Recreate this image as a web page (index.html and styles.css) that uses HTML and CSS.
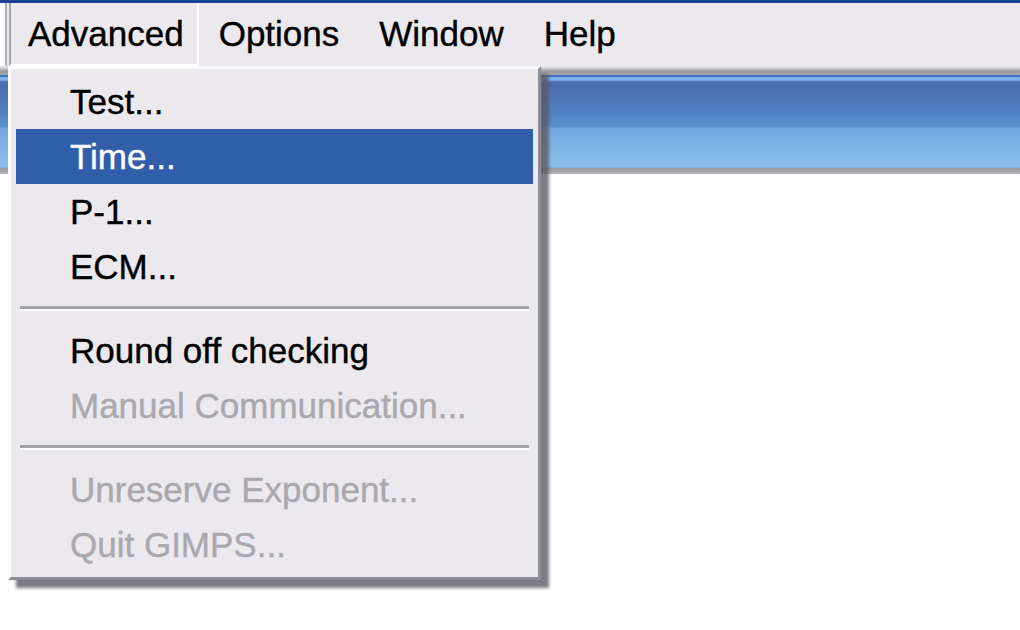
FILE: index.html
```html
<!DOCTYPE html>
<html lang="en">
<head>
    <meta charset="UTF-8">
    <title>Prime95 - Advanced menu</title>
    <link rel="stylesheet" href="styles.css">
</head>

<body>

<div class="titleEdge"></div>

<div class="menuBar">
    <div class="menuBarItem pressed">Advanced</div>
    <div class="menuBarItem">Options</div>
    <div class="menuBarItem">Window</div>
    <div class="menuBarItem">Help</div>
</div>

<div class="menuBarEdge"></div>

<div class="workArea">
    <div class="innerTitle"></div>
</div>

<div class="dropMenu">
    <div class="menuItem">Test...</div>
    <div class="menuItem selected">Time...</div>
    <div class="menuItem">P-1...</div>
    <div class="menuItem">ECM...</div>
    <div class="menuSeparator"></div>
    <div class="menuItem">Round off checking</div>
    <div class="menuItem disabled">Manual Communication...</div>
    <div class="menuSeparator"></div>
    <div class="menuItem disabled">Unreserve Exponent...</div>
    <div class="menuItem disabled">Quit GIMPS...</div>
</div>

</body>
</html>
```

FILE: styles.css
```css
body {
    margin: 0;
    background-color: #ffffff;
    font-family: "Liberation Sans", Arial, sans-serif;
    font-size: 35px;
    overflow: hidden;
}

.titleEdge {
    height: 3px;
    background-color: #1d3f96;
}

.menuBar {
    height: 63px;
    display: flex;
    align-items: stretch;
    padding-left: 2px;
    background-color: #ebe9ed;
    border-left: 2px solid #b0afb4;
    margin-left: 5px;
    box-sizing: border-box;
}

.menuBarItem {
    display: flex;
    align-items: center;
    padding: 0 20px 2px 20px;
    color: #000000;
    -webkit-text-stroke: 0.4px #000000;
}

.menuBarItem.pressed {
    padding-left: 17px;
    padding-right: 13px;
    border-left: 2px solid #a7a6ab;
    border-bottom: 2px solid #ffffff;
    border-right: 2px solid #ffffff;
    padding-bottom: 0;
}

.menuBarEdge {
    height: 9px;
    background: linear-gradient(to bottom, #ebe9ed 0, #d2d1d6 2px, #9c9ca0 5px, #a9a9ad 9px);
}

.workArea {
    height: 460px;
}

.innerTitle {
    height: 99px;
    background: linear-gradient(to bottom,
        #3f6fc6 0, #3f6fc6 2px,
        #80b0ec 2px, #80b0ec 5px,
        #4a6bb0 7px, #5282c5 40%, #5a8fd0 52%,
        #74a6e0 54%, #8cc0e8 92%, #7aa4e0 94%,
        #9a9a9e 94%, #b4b4b8 100%);
}

/* dropdown sits over the page like a real popup */
.dropMenu {
    position: absolute;
    left: 8px;
    top: 66px;
    width: 517px;
    padding: 5px 5px 5px 5px;
    background-color: #ebe9ed;
    border: 3px solid;
    border-color: #fcfcfe #8d8d93 #8d8d93 #fcfcfe;
    box-shadow: 8px 8px 3px rgba(90, 90, 98, 0.8);
}

.menuItem {
    height: 55px;
    line-height: 55px;
    padding-left: 54px;
    color: #000000;
    white-space: nowrap;
    -webkit-text-stroke: 0.4px #000000;
}

.menuItem.selected {
    background-color: #305ea9;
    color: #ffffff;
    -webkit-text-stroke: 0.4px #ffffff;
}

.menuItem.disabled {
    color: #aaa8ae;
    -webkit-text-stroke: 0.4px #aaa8ae;
}

.menuSeparator {
    height: 29px;
    margin: 0 4px;
    background: linear-gradient(to bottom, transparent 12px, #a3a2a8 12px, #a3a2a8 15px, #ffffff 15px, #ffffff 17px, transparent 17px);
}
```
